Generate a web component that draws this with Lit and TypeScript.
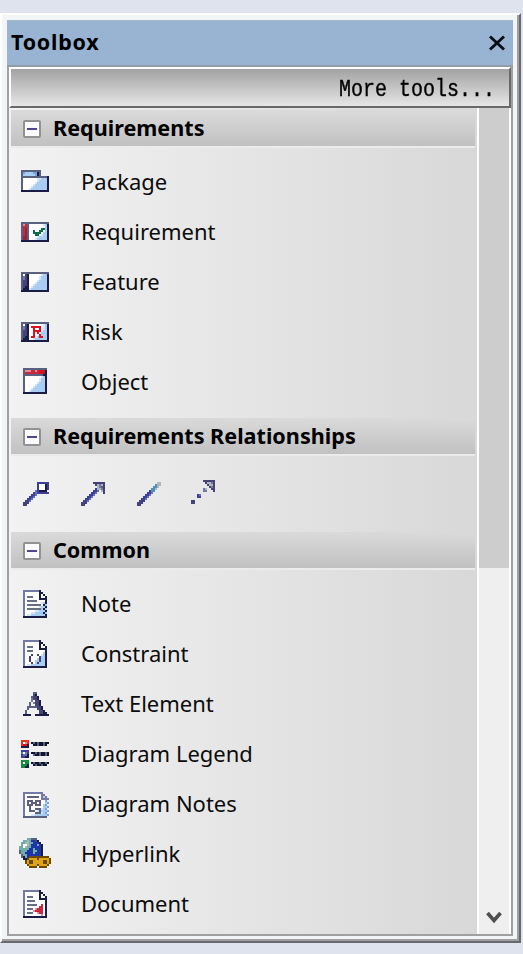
import { LitElement, html, css, svg } from "lit";
import { customElement, property } from "lit/decorators.js";

/* Icons are 16x16 pixmaps: one character per pixel, "." is transparent. */
const PALETTE: Record<string, string> = {
  s: "#596080", d: "#1b1c46", b: "#a9cdf2", l: "#d5e6fa", w: "#ffffff",
  m: "#74a5dc", p: "#7478a4", v: "#444374", r: "#c8283c", k: "#9b2038",
  i: "#e78b9a", g: "#0b6d4a", R: "#dc1020", n: "#3d3d9a", u: "#6570bd",
  t: "#4c91bd", h: "#b0b4bd", e: "#667084", G: "#168c3c", B: "#1d35a8",
  T: "#6eaea7", O: "#6d4900", Y: "#dfa51a", D: "#10152c", o: "#df321e",
};

const PIXMAPS: Record<string, string[]> = {
  package: [
    "", "", ".ssssssssss", ".smbbbbmmds", ".sbbbbbbmds",
    ".sssssssssssssd", ".swwwwwwwllbbbd", ".swwwwwwwlbbbbd",
    ".swwwwwwlbbbbbd", ".swwwwwlbbbbbbd", ".swwwwlbbbbbbbd",
    ".swwwlbbbbbbbbd", ".dddddddddddddd",
  ],
  requirement: [
    "", "", "", ".ssssssssssssss", ".sirswwwwwwwlbd", ".srrswwwwwwwwbd",
    ".srkswwwwwwggbd", ".srkswwgwwggwbd", ".srkswwggggwbbd",
    ".srkswwwggwlbbd", ".skkswwwwlbbbbd", ".skkswwwlbbbbbd", ".dddddddddddddd",
  ],
  feature: [
    "", "", "", ".ssssssssssssss", ".swvdwwwwwwlbbd", ".spvdwwwwwlbbbd",
    ".spvdwwwwwlbbbd", ".svvdwwwwlbbbbd", ".svvdwwwlbbbbbd", ".svvdwwlbbbbbbd",
    ".svddwlbbbbbbbd", ".sdddlbbbbbbbbd", ".dddddddddddddd",
  ],
  risk: [
    "", "", "", ".ssssssssssssss", ".swvdwwwwwwwlbd", ".spvdwRRRRRwlbd",
    ".spvdwwRwwRllbd", ".svvdwwRRRRlbbd", ".svvdwwRwRlbbbd", ".svvdwwRwwRbbbd",
    ".svddwRRwbRRbbd", ".sdddwwlbbbbbbd", ".dddddddddddddd",
  ],
  object: [
    "", "..ssssssssssss", "..siiirrirRRRd", "..srrrrrrrRRkd", "..ssssssssssdd",
    "..swwwwwwwwlbd", "..swwwwwwwlbbd", "..swwwwwwwlbbd", "..swwwwwwlbbbd",
    "..swwwwwlbbbbd", "..swwwwlbbbbbd", "..swwwlbbbbbbd", "..swwlbbbbbbbd",
    "..dddddddddddd",
  ],
  note: [
    "", "..ppppppppd", "..pwwwwwwwdd", "..pwwwwwwwdwd", "..pweeewwwdwwd",
    "..pwwwwwwwdddd", "..pweeeeewwwwd", "..pwwwwwwwwlbd", "..pweeeeeeewdb",
    "..pwwwwwwwlbbd", "..pweeeeeeebdb", "..pwwwwwllbbbd", "..pwwwllbbbbdb",
    "..pwllbbbbbbbd", "..dddddddddddd",
  ],
  constraint: [
    "", "..ppppppppd", "..pwwwwwwwdd", "..pwwwwwwwdwd", "..pweeewwwdwwd",
    "..pwwwwwwwdddd", "..pweeewwwwwwd", "..pwwwwwwwwwbd", "..pwwwvwwvwlbd",
    "..pwwvwwwwvbbd", "..pwwvwwwbvbbd", "..pwwvwwbbvbbd", "..pwwwvwbvbbbd",
    "..pwllbbbbbbbd", "..dddddddddddd",
  ],
  text: [
    "", "", ".......ss", ".......vd", "......svvd", "......pvvd",
    "......pwvvd", ".....s.pvvd", ".....s..vvd", "....sssssvvd",
    "....s....vvd", "...s......vvd", "...s......vvdd", "..dddd..ddddddd",
  ],
  legend: [
    "", ".oooo", ".owio.DsDsDDsDD", ".oRRd..DDsDDsD", ".dddd",
    "", ".nnnn", ".uwpn.DDsDsDDsD", ".nuud..sDDsDDsD", ".nndd",
    "", ".GGGG", ".GwGG.DsDDsDDsD", ".GGGd..DsDDsDD", ".GGdd",
  ],
  notes: [
    "", "", "..pppppppppp", "..pwwwwwwwwpp", "..pwsssssswpbp", "..pwwwwwwwwpppp",
    "..pwssswssswwm", "..pwswssswswwbm", "..pwssswssswbm", "..pwwswwwwwwbbm",
    "..pwwswwssslbm", "..pwwssswlsbbbm", "..pwwwwwssslbm", "..pwwwllbbbbbbm",
    "..ssssssssssss",
  ],
  hyperlink: [
    "....TTsss", "..TThTBBvd", ".TThhTTBBBd", ".TwwhTBBBTBd", "TTwhTTBBBBBd",
    "TTTTTBBTBBBd", "sTTTBBBTTBBd", "sTTBBBBTBBBd", ".sTTBBBBBBBd",
    ".sdTBOOOOOOOOOO", "..ddOYYYYOYYYYYO", "...OYOOYYYYYOOYO",
    "...OYOOYYYYYOOYO", "....OYYYYOYYYYO", ".....OOOO.OOOO",
  ],
  document: [
    "", "..ppppppppd", "..pwwwwwwwdd", "..pwwwwwwwdwd", "..pweeewwwdwwd",
    "..pwwwwwwwdddd", "..pweeeewwwwwd", "..pwwwwwwwwwwd", "..pweeeeewwrwd",
    "..pwwwwwwwrrwd", "..pweeewirrrwd", "..pwwwwirrrrwd", "..pweeewwirrwd",
    "..pwwwwwwwwiwd", "..dddddddddddd",
  ],
  aggregate: [
    "", "", ".........nnnnnn", ".........nwwwdn", ".........nwwwdn",
    ".........nwwwdn", "........undddd", ".......nunnnnnn", "......nnu",
    ".....nnu", "....nnu", "...vnu", "..vvn", "..vv",
  ],
  realize: [
    "", "", ".........vvvvvv", "..........vhphv", "...........hpsv", "..........nhhpv",
    ".........nnu.hv", "........nnu...v", ".......nnu", "......nnu", ".....nnu",
    "....vnu", "...vvn", "...vv",
  ],
  associate: [
    "", "", ".............hh", "............thh", "...........tth", "..........tth",
    ".........ntt", "........nnu", ".......nnu", "......nnu", ".....vnu",
    "....vvn", "...vvn", "...vv",
  ],
  dependency: [
    "", "........vvvvvv", ".........vhhpv", "..........vhhv", "...........vpv",
    "........ph..vv", "........pp...v", "", ".....nu", ".....nn", "", "..vv", "..vv",
  ],
};

@customElement("pixel-icon")
export class PixelIcon extends LitElement {
  @property() name = "";

  static styles = css`
    :host { display: block; flex: none; width: 32px; height: 32px; }
    svg { display: block; width: 32px; height: 32px; filter: blur(0.35px); }
  `;

  render() {
    const rows = PIXMAPS[this.name] ?? [];
    return html`<svg viewBox="0 0 16 16" shape-rendering="crispEdges" aria-hidden="true">
      ${rows.flatMap((row, y) =>
        [...row].map((c, x) =>
          c === "." ? null : svg`<rect x=${x} y=${y} width="1" height="1" fill=${PALETTE[c]}></rect>`
        )
      )}
    </svg>`;
  }
}

interface Section {
  title: string;
  items?: [string, string][];
  links?: string[];
}

const SECTIONS: Section[] = [
  {
    title: "Requirements",
    items: [
      ["package", "Package"], ["requirement", "Requirement"], ["feature", "Feature"],
      ["risk", "Risk"], ["object", "Object"],
    ],
  },
  { title: "Requirements Relationships", links: ["aggregate", "realize", "associate", "dependency"] },
  {
    title: "Common",
    items: [
      ["note", "Note"], ["constraint", "Constraint"], ["text", "Text Element"],
      ["legend", "Diagram Legend"], ["notes", "Diagram Notes"],
      ["hyperlink", "Hyperlink"], ["document", "Document"],
    ],
  },
];

@customElement("app-root")
export class AppRoot extends LitElement {
  static styles = css`
    * { box-sizing: border-box; }
    :host {
      display: block; box-sizing: border-box; width: 523px; height: 954px; padding: 13px 2px 11px 0;
      overflow: hidden; background: #dfe3ed; color: #0c0c0c;
      font-family: "Noto Sans", "Open Sans", sans-serif; font-size: 22px;
    }
    .window {
      height: 930px; padding: 5px 6px 5px 3px; background: #f2f5f7;
      border: 2px solid; border-color: #fff #69696f #69696f #fff;
      box-shadow: inset -2px -2px #a0a0a0;
    }
    .frame { height: 916px; padding-left: 2px; display: flex; flex-direction: column; }
    .title {
      flex: none; height: 47px; padding: 0 7px 3px 4px;
      display: flex; align-items: center; justify-content: space-between;
      background: #99b4d3; border-bottom: 2px solid #929da8; border-top: 1px solid #a6b9cb;
      font-weight: 700; font-size: 21.5px; letter-spacing: 0.75px; color: #000;
    }
    .close { width: 18px; height: 16px; margin-top: 3px; }
    .body {
      flex: 1; min-height: 0; display: flex; flex-direction: column;
      border: 2px solid #a0a0a0; border-top: 0; background: #fff;
    }
    .more {
      flex: none; height: 41px; display: flex; align-items: center; justify-content: flex-end;
      padding: 4px 14px 0 0; border: 2px solid; border-color: #fff #696969 #696969 #fff;
      background: linear-gradient(#a2a2a2, #e6e6e6);
      font: 20px "Liberation Mono", monospace; color: #000;
    }
    .more span { transform: scaleY(1.18); -webkit-text-stroke: 0.3px #000; }
    .main { flex: 1; min-height: 0; display: flex; padding-right: 2px; }
    .list {
      width: 468px; padding: 2px 2px 0 2px;
      background: linear-gradient(90deg, #f2f2f2, #d8d8d8);
    }
    .head {
      height: 36px; display: flex; align-items: center; padding: 0 0 1px 12px; gap: 12px;
      background: linear-gradient(#dadada, #c1c1c1); color: #000;
      font-weight: 700; font-size: 21.6px; box-shadow: 0 2px #ebebeb;
    }
    .toggle {
      flex: none; width: 18px; height: 18px; margin-top: 2px; border: 2px solid #929292; border-radius: 2px;
      background: #fbfbff; display: grid; place-items: center;
    }
    .minus { width: 10px; height: 2px; background: #4b4694; }
    .items { padding: 11px 0; }
    .item { height: 50px; display: flex; align-items: center; gap: 30px; padding-left: 8px; }
    .item .label { padding-bottom: 2px; }
    .links { height: 78px; display: flex; gap: 24px; padding: 24px 0 0 8px; }
    .scroll {
      flex: 1; border-left: 2px solid #fff; background: #efefef;
      display: flex; flex-direction: column; justify-content: space-between; align-items: center;
    }
    .thumb { width: 100%; height: 460px; background: #cdcdcd; }
    .down { width: 16px; height: 14px; margin-bottom: 9px; }
    svg { display: block; }
    .label { white-space: pre; }
  `;

  private section(s: Section) {
    return html`
      <div class="head">
        <div class="toggle"><div class="minus"></div></div>
        <span class="label">${s.title}</span>
      </div>
      ${s.items
        ? html`<div class="items">
            ${s.items.map(([icon, label]) => html`<div class="item">
              <pixel-icon name=${icon}></pixel-icon><span class="label">${label}</span>
            </div>`)}
          </div>`
        : html`<div class="links">${s.links!.map((n) => html`<pixel-icon name=${n}></pixel-icon>`)}</div>`}
    `;
  }

  render() {
    return html`
      <div class="window"><div class="frame">
        <div class="title">
          <span>Toolbox</span>
          <svg class="close" viewBox="0 0 18 16"><path d="M2 1.5 16 14.5M16 1.5 2 14.5" stroke="#050b14" stroke-width="2.9"/></svg>
        </div>
        <div class="body">
          <div class="more"><span>More tools...</span></div>
          <div class="main">
            <div class="list">${SECTIONS.map((s) => this.section(s))}</div>
            <div class="scroll">
              <div class="thumb"></div>
              <svg class="down" viewBox="0 0 16 14"><path d="M1.5 2 8 9.5 14.5 2" fill="none" stroke="#4f4f4f" stroke-width="3.6"/></svg>
            </div>
          </div>
        </div>
      </div></div>
    `;
  }
}
